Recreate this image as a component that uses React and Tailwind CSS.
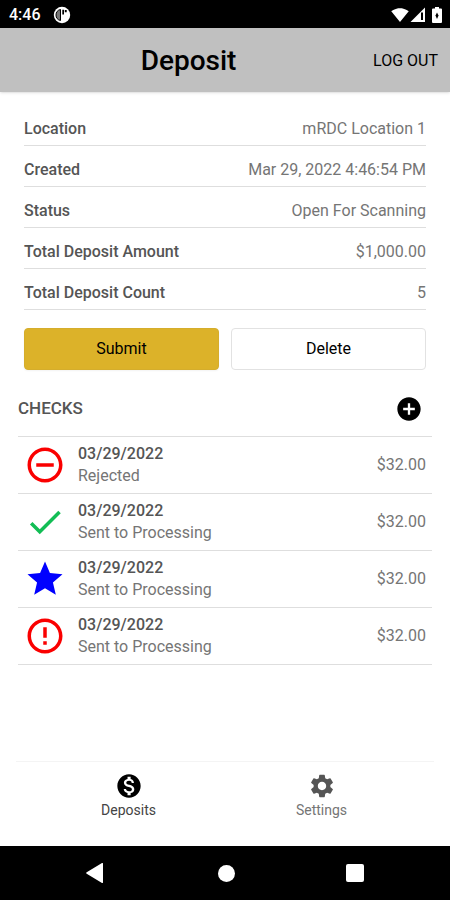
import {
  MdAddCircle,
  MdCheck,
  MdErrorOutline,
  MdMonetizationOn,
  MdRemoveCircleOutline,
  MdSettings,
  MdSignalWifi4Bar,
  MdStar,
} from "react-icons/md";

const details = [
  { label: "Location", value: "mRDC Location 1" },
  { label: "Created", value: "Mar 29, 2022 4:46:54 PM" },
  { label: "Status", value: "Open For Scanning" },
  { label: "Total Deposit Amount", value: "$1,000.00" },
  { label: "Total Deposit Count", value: "5" },
];

const checks = [
  { id: 1, icon: MdRemoveCircleOutline, color: "text-[#fa0000]", date: "03/29/2022", status: "Rejected", amount: "$32.00" },
  { id: 2, icon: MdCheck, color: "text-[#12bd55]", date: "03/29/2022", status: "Sent to Processing", amount: "$32.00" },
  { id: 3, icon: MdStar, color: "text-[#0000ff]", date: "03/29/2022", status: "Sent to Processing", amount: "$32.00" },
  { id: 4, icon: MdErrorOutline, color: "text-[#fa0000]", date: "03/29/2022", status: "Sent to Processing", amount: "$32.00" },
];

export default function App() {
  return (
    <div className="flex min-h-screen flex-col bg-white font-[Roboto,sans-serif] text-base text-[#757575]">
      <StatusBar />

      <header className="flex h-16 items-center bg-[#c0c0c0] pt-0.5 pr-3 pl-1 text-black shadow-sm">
        <h1 className="flex-1 text-center text-[28px] font-medium">Deposit</h1>
        <button type="button">LOG OUT</button>
      </header>

      <main className="flex-1 pt-[13px]">
        <dl className="px-6">
          {details.map(({ label, value }) => (
            <div key={label} className="flex h-[41px] items-end justify-between border-b border-[#dedede] pb-1">
              <dt className="font-medium text-[#555]">{label}</dt>
              <dd>{value}</dd>
            </div>
          ))}
        </dl>

        <div className="mt-[18px] grid grid-cols-2 gap-3 px-6 text-black">
          <button type="button" className="h-[42px] rounded border border-[#d5ad2c] bg-[#dcb229] shadow-xs">
            Submit
          </button>
          <button type="button" className="h-[42px] rounded border border-[#e2e2e2] bg-white">
            Delete
          </button>
        </div>

        <section className="mx-[18px]">
          <div className="flex h-[67px] items-center justify-between border-b border-[#dedede] pt-3 pr-[9px]">
            <h2 className="text-[17px] font-medium text-[#555]">CHECKS</h2>
            <button type="button" aria-label="Add check" className="text-black">
              <MdAddCircle className="size-7" />
            </button>
          </div>

          <ul>
            {checks.map((check) => (
              <CheckRow key={check.id} {...check} />
            ))}
          </ul>
        </section>
      </main>

      <nav className="mx-4 grid h-[85px] grid-cols-2 border-t border-[#f4f4f4] px-4 text-sm">
        <a href="#deposits" className="flex flex-col items-center pt-2.5 text-[#444]">
          <MdMonetizationOn className="size-7 text-black" />
          Deposits
        </a>
        <a href="#settings" className="flex flex-col items-center pt-2.5">
          <MdSettings className="size-7 text-[#555]" />
          Settings
        </a>
      </nav>

      <SystemNav />
    </div>
  );
}

function CheckRow({ icon: Icon, color, date, status, amount }) {
  return (
    <li className="flex h-[57px] items-center border-b border-[#dedede] px-[6px]">
      <Icon className={`size-[42px] shrink-0 ${color}`} />
      <div className="ml-3 flex-1 leading-[22px]">
        <p className="font-medium text-[#555]">{date}</p>
        <p>{status}</p>
      </div>
      <span>{amount}</span>
    </li>
  );
}

function StatusBar() {
  return (
    <div className="flex h-7 items-center justify-between bg-black pt-0.5 pr-2 pl-[9px] text-white">
      <div className="flex items-center gap-3">
        <span className="font-medium">4:46</span>
        <svg viewBox="0 0 18 18" className="size-[18px]">
          <circle cx="9" cy="9" r="8.2" fill="#fff" />
          <path d="M7.5 3.5C4.500 4 3 6.300 3 9s1.500 5 4.500 5.500z" fill="#777" stroke="#000" />
          <path d="M9.300 3.800h1.700v4.700H9.300zM11.800 4h1.900v2.200h-1.900z" fill="#000" />
        </svg>
      </div>
      <div className="flex items-center">
        <MdSignalWifi4Bar className="size-[18px]" />
        <svg viewBox="0 0 16 16" className="ml-px size-4">
          <path d="M15 .5V15H.5z" fill="#fff" />
          <path d="M11 5.5h2V13h-2z" fill="#000" />
        </svg>
        <svg viewBox="0 0 10 16" className="ml-[6px] h-4 w-[10px]">
          <path d="M3 0h4v1.5h2a1 1 0 0 1 1 1V15a1 1 0 0 1-1 1H1a1 1 0 0 1-1-1V2.500a1 1 0 0 1 1-1h2z" fill="#fff" />
          <path d="M5 5.500 6.500 8.500 5 12 3.500 8.500z" fill="#000" />
        </svg>
      </div>
    </div>
  );
}

function SystemNav() {
  return (
    <div className="flex h-[54px] items-center justify-between bg-black px-[86px] text-white">
      <button type="button" aria-label="Back">
        <svg viewBox="0 0 20 20" className="size-5" fill="currentColor">
          <path d="M17 .7v18.600a.7.700 0 0 1-1 .6L.7 10.800a.9.900 0 0 1 0-1.600L16 .1a.7.700 0 0 1 1 .6z" />
        </svg>
      </button>
      <button type="button" aria-label="Home" className="size-[17px] rounded-full bg-white" />
      <button type="button" aria-label="Recent apps" className="size-[18px] rounded-xs bg-white" />
    </div>
  );
}
